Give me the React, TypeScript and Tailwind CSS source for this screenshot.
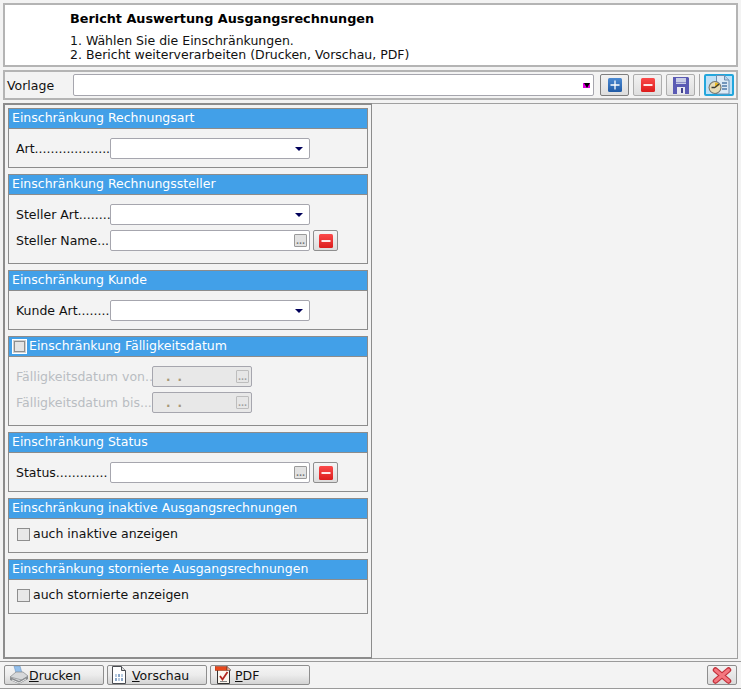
import React from 'react';

const font = "[font-family:'DejaVu_Sans',Verdana,sans-serif]";

const Dots = ({ label, width = 'w-[94px]', muted }: { label: string; width?: string; muted?: boolean }) => (
  <div className={`${width} shrink-0 whitespace-nowrap ${muted ? 'text-[#b9bdc2]' : 'text-[#111]'}`}>{label}</div>
);

const PlusIcon = () => (
  <svg width="14" height="14" viewBox="0 0 14 14">
    <defs>
      <linearGradient id="plusFill" x1="0" y1="0" x2="0" y2="1">
        <stop offset="0" stopColor="#4c8ad2" />
        <stop offset="1" stopColor="#1f5aa6" />
      </linearGradient>
    </defs>
    <rect width="14" height="14" rx="1.500" fill="url(#plusFill)" />
    <path d="M7 2.500v9M2.500 7h9" stroke="#fff" strokeWidth="1.300" />
  </svg>
);

const MinusIcon = () => (
  <svg width="14" height="14" viewBox="0 0 14 14">
    <defs>
      <linearGradient id="minusFill" x1="0" y1="0" x2="0" y2="1">
        <stop offset="0" stopColor="#fb4a4a" />
        <stop offset="1" stopColor="#dc1c1c" />
      </linearGradient>
    </defs>
    <rect width="14" height="14" rx="1.500" fill="url(#minusFill)" />
    <rect x="2.500" y="6" width="9" height="2" fill="#ffe8e8" />
  </svg>
);

const SaveIcon = () => (
  <svg width="16" height="17" viewBox="0 0 16 17">
    <path d="M0 0h15l1 1v16H0z" fill="#5a5ab4" />
    <rect x="3" y="1" width="10" height="6" fill="#c9cde6" />
    <rect x="3" y="5" width="10" height="1" fill="#8d90c8" />
    <rect x="4" y="10" width="8" height="7" fill="#e8e8f0" />
    <rect x="8" y="11" width="2" height="5" fill="#3f3f8c" />
  </svg>
);

const ReportIcon = () => (
  <svg width="23" height="20" viewBox="0 0 23 20">
    <path d="M8.500.5h8l4.500 4.500v14H8.500z" fill="#dce9f5" stroke="#6e8fb2" />
    <path d="M16.500.5v4.500H21" fill="#b9cfe4" stroke="#6e8fb2" />
    <path d="M14 8h5M14 11h5M14 14h5" stroke="#4f79a8" strokeWidth="1.300" />
    <circle cx="7" cy="12.500" r="6.500" fill="#77776f" />
    <circle cx="7" cy="12.500" r="5.400" fill="#e6dcb8" />
    <path d="M7 12.500V7.500a5 5 0 0 1 4.500 3z" fill="#e8b820" />
    <path d="M7 12.500l4-3.500M7 12.500H3.500" stroke="#3c3c34" strokeWidth="1.300" />
  </svg>
);

const PrinterIcon = () => (
  <svg width="20" height="19" viewBox="0 0 20 19">
    <path d="M5 0h6l2 7H7z" fill="#94c0ec" stroke="#6f97c2" strokeWidth=".6" />
    <path d="M1 11l6-5h7l5 4-6 4z" fill="#d6d8da" stroke="#85888b" strokeWidth=".7" />
    <path d="M1 11l9 4 9-5v3l-9 5-9-4z" fill="#8a8d90" />
    <path d="M3 14l7 3 7-4" stroke="#e8e8e8" strokeWidth="1" fill="none" />
  </svg>
);

const DocIcon = () => (
  <svg width="14" height="18" viewBox="0 0 14 18">
    <path d="M.5.500h9l4 4v13H.500z" fill="#fff" stroke="#4a4d52" />
    <path d="M9.500.500v4h4" fill="#ddd" stroke="#4a4d52" />
    <rect x="3" y="8" width="2" height="3" fill="#b8cbe0" />
    <rect x="6" y="8" width="2" height="3" fill="#8aa6c8" />
    <rect x="9" y="8" width="2" height="3" fill="#b8cbe0" />
    <rect x="3" y="12" width="2" height="3" fill="#8aa6c8" />
    <rect x="6" y="12" width="2" height="3" fill="#b8cbe0" />
    <rect x="9" y="12" width="2" height="3" fill="#8aa6c8" />
  </svg>
);

const PdfIcon = () => (
  <svg width="17" height="18" viewBox="0 0 17 18">
    <path d="M2.500 3.500h12v14h-12z" fill="#fbf6ee" stroke="#333" />
    <rect x="0" y="0.500" width="12" height="4" fill="#e8481c" stroke="#8c2a10" strokeWidth=".5" />
    <path d="M12 .5l3.500 3v1H12z" fill="#f0a58c" stroke="#333" strokeWidth=".5" />
    <path d="M5 10l2.500 3.500L12.500 6" fill="none" stroke="#b3261e" strokeWidth="1.800" />
    <path d="M5 15.500h7" stroke="#888" />
  </svg>
);

const CloseIcon = () => (
  <svg width="20" height="17" viewBox="0 0 20 17">
    <path d="M3.500 3l13 11M16.500 3L3.500 14" stroke="#c2303a" strokeWidth="5.500" strokeLinecap="round" />
    <path d="M3.500 3l13 11M16.500 3L3.500 14" stroke="#f4777f" strokeWidth="3" strokeLinecap="round" />
  </svg>
);

const Arrow = () => <div className="w-0 h-0 border-x-[4px] border-x-transparent border-t-[4px] border-t-[#00005a]" />;

const Combo = () => (
  <div className="w-[200px] h-[21px] shrink-0 bg-white border border-[#a6a6ae] rounded-[2px] flex items-center justify-end pr-[6px]">
    <Arrow />
  </div>
);

const Dots3 = ({ muted }: { muted?: boolean }) => (
  <div
    className={`w-[13px] h-[13px] border rounded-[1px] flex items-end justify-center text-[8px] leading-[9px] font-bold ${
      muted ? 'border-[#bdbdbd] bg-[#e6e6e6] text-[#a0a0a0]' : 'border-[#9a9a9a] bg-[#e2e2e2] text-[#777]'
    }`}
  >
    ...
  </div>
);

const Lookup = () => (
  <div className="w-[200px] h-[21px] shrink-0 bg-white border border-[#a6a6ae] rounded-[2px] flex items-center justify-end pr-[2px]">
    <Dots3 />
  </div>
);

const DateField = () => (
  <div className="w-[100px] h-[21px] shrink-0 bg-[#e8e8e8] border border-[#a6a6ae] rounded-[2px] flex items-center justify-between pl-[13px] pr-[2px]">
    <span className="text-[#a89878] font-bold tracking-[7px] text-[12px] leading-none">..</span>
    <Dots3 muted />
  </div>
);

const ClearBtn = () => (
  <div className="ml-[3px] w-[25px] h-[21px] shrink-0 border border-[#8e8e8e] rounded-[2px] bg-gradient-to-b from-[#f6f6f6] to-[#dcdcdc] flex items-center justify-center">
    <MinusIcon />
  </div>
);

const Section = ({
  title,
  height,
  check,
  children,
}: {
  title: string;
  height: string;
  check?: boolean;
  children: React.ReactNode;
}) => (
  <div className={`${height} border border-[#8c8c8c] flex flex-col`}>
    <div className="h-[20px] shrink-0 bg-[#42a0e8] border-b border-b-[#8c8c8c] flex items-start pl-[3px] text-white leading-[16px]">
      {check && (
        <div className="w-[15px] h-[15px] mr-[2px] mt-[2px] border border-white bg-[#d0d0d0] p-[1px]">
          <div className="w-full h-full border border-[#8e8e8e] bg-[#e4e4e4]" />
        </div>
      )}
      <span className="pt-[1px]">{title}</span>
    </div>
    <div className="pl-[7px] pt-[9px] flex flex-col gap-[5px]">{children}</div>
  </div>
);

const Row = ({ children }: { children: React.ReactNode }) => <div className="flex items-center">{children}</div>;

const Check = ({ label }: { label: string }) => (
  <div className="flex items-center pl-[1px] -mt-[2px] text-[#111]">
    <div className="w-[13px] h-[13px] border border-[#8e8e8e] bg-[#e8e8e8] mr-[3px]" />
    {label}
  </div>
);

const IconBtn = ({ children, strong }: { children: React.ReactNode; strong?: boolean }) => (
  <div
    className={`w-[29px] h-[22px] shrink-0 rounded-[2px] bg-gradient-to-b from-[#f2f2f2] to-[#dedede] flex items-center justify-center border ${
      strong ? 'border-[#7e7e7e]' : 'border-[#adadad]'
    }`}
  >
    {children}
  </div>
);

const BottomBtn = ({ icon, accel, rest }: { icon: React.ReactNode; accel: string; rest: string }) => (
  <div className="w-[100px] h-[20px] shrink-0 border border-[#8e8e8e] rounded-[2px] bg-gradient-to-b from-[#f5f5f5] via-[#ececec] to-[#d4d4d4] flex items-center pl-[4px] text-[#111]">
    <div className="w-[20px] shrink-0 flex items-center">{icon}</div>
    <span className="mt-[1px]">
      <span className="underline">{accel}</span>
      {rest}
    </span>
  </div>
);

export default function App() {
  return (
    <div className={`w-[741px] h-[689px] bg-[#f3f3f3] overflow-hidden flex flex-col text-[12.5px] leading-[16px] ${font}`}>
      {/* Header */}
      <div className="mx-[3px] mt-[3px] h-[64px] shrink-0 bg-white border-2 border-[#b4b4b4] pl-[65px] pt-[6px] text-[#111]">
        <div className="font-bold text-black h-[22px] text-[12.8px]">Bericht Auswertung Ausgangsrechnungen</div>
        <div className="leading-[14px] pt-[1px]">1. Wählen Sie die Einschränkungen.</div>
        <div className="leading-[14px]">2. Bericht weiterverarbeiten (Drucken, Vorschau, PDF)</div>
      </div>

      {/* Vorlage */}
      <div className="mx-[3px] mt-[3px] h-[30px] shrink-0 border-2 border-[#b4b4b4] flex items-center pl-[2px] text-[#111]">
        <div className="w-[66px] shrink-0 mt-[1px]">Vorlage</div>
        <div className="w-[521px] h-[22px] shrink-0 bg-white border border-[#a6a6ae] rounded-[2px] flex items-center justify-end pr-[3px]">
          <div className="w-[7px] h-[5px] bg-[#e000e0] flex justify-center">
            <div className="w-0 h-0 border-x-[3px] border-x-transparent border-t-[5px] border-t-black" />
          </div>
        </div>
        <div className="ml-[6px] flex items-center gap-[4px]">
          <IconBtn strong>
            <PlusIcon />
          </IconBtn>
          <IconBtn>
            <MinusIcon />
          </IconBtn>
          <IconBtn>
            <SaveIcon />
          </IconBtn>
        </div>
        <div className="ml-[4px] w-px h-[22px] bg-[#a8a8a8]" />
        <div className="ml-[4px] w-[30px] h-[22px] shrink-0 rounded-[2px] border-2 border-[#22a6dc] bg-[#bfe0f6] flex items-center justify-center">
          <ReportIcon />
        </div>
      </div>

      {/* Main */}
      <div className="mx-[3px] mt-[3px] h-[556px] shrink-0 flex">
        <div className="w-[369px] shrink-0 border-2 border-r border-[#8c8c8c] pl-[3px] pt-[3px] pr-[3px] flex flex-col gap-[6px]">
          <Section title="Einschränkung Rechnungsart" height="h-[60px]">
            <Row>
              <Dots label="Art..................." />
              <Combo />
            </Row>
          </Section>
          <Section title="Einschränkung Rechnungssteller" height="h-[90px]">
            <Row>
              <Dots label="Steller Art........" />
              <Combo />
            </Row>
            <Row>
              <Dots label="Steller Name...." />
              <Lookup />
              <ClearBtn />
            </Row>
          </Section>
          <Section title="Einschränkung Kunde" height="h-[60px]">
            <Row>
              <Dots label="Kunde Art........" />
              <Combo />
            </Row>
          </Section>
          <Section title="Einschränkung Fälligkeitsdatum" height="h-[90px]" check>
            <Row>
              <Dots label="Fälligkeitsdatum von.." width="w-[136px]" muted />
              <DateField />
            </Row>
            <Row>
              <Dots label="Fälligkeitsdatum bis..." width="w-[136px]" muted />
              <DateField />
            </Row>
          </Section>
          <Section title="Einschränkung Status" height="h-[60px]">
            <Row>
              <Dots label="Status............." />
              <Lookup />
              <ClearBtn />
            </Row>
          </Section>
          <Section title="Einschränkung inaktive Ausgangsrechnungen" height="h-[55px]">
            <Check label="auch inaktive anzeigen" />
          </Section>
          <Section title="Einschränkung stornierte Ausgangsrechnungen" height="h-[55px]">
            <Check label="auch stornierte anzeigen" />
          </Section>
        </div>
        <div className="flex-1 border border-[#a0a0a0] border-l-0" />
      </div>

      {/* Bottom bar */}
      <div className="mt-[2px] h-[28px] shrink-0 border-y border-[#9a9a9a] flex items-center gap-[3px] pl-[4px] pr-[4px]">
        <BottomBtn icon={<PrinterIcon />} accel="D" rest="rucken" />
        <BottomBtn icon={<DocIcon />} accel="V" rest="orschau" />
        <BottomBtn icon={<PdfIcon />} accel="P" rest="DF" />
        <div className="ml-auto w-[30px] h-[20px] border border-[#8e8e8e] rounded-[2px] bg-gradient-to-b from-[#f2f2f2] to-[#dcdcdc] flex items-center justify-center">
          <CloseIcon />
        </div>
      </div>
    </div>
  );
}
